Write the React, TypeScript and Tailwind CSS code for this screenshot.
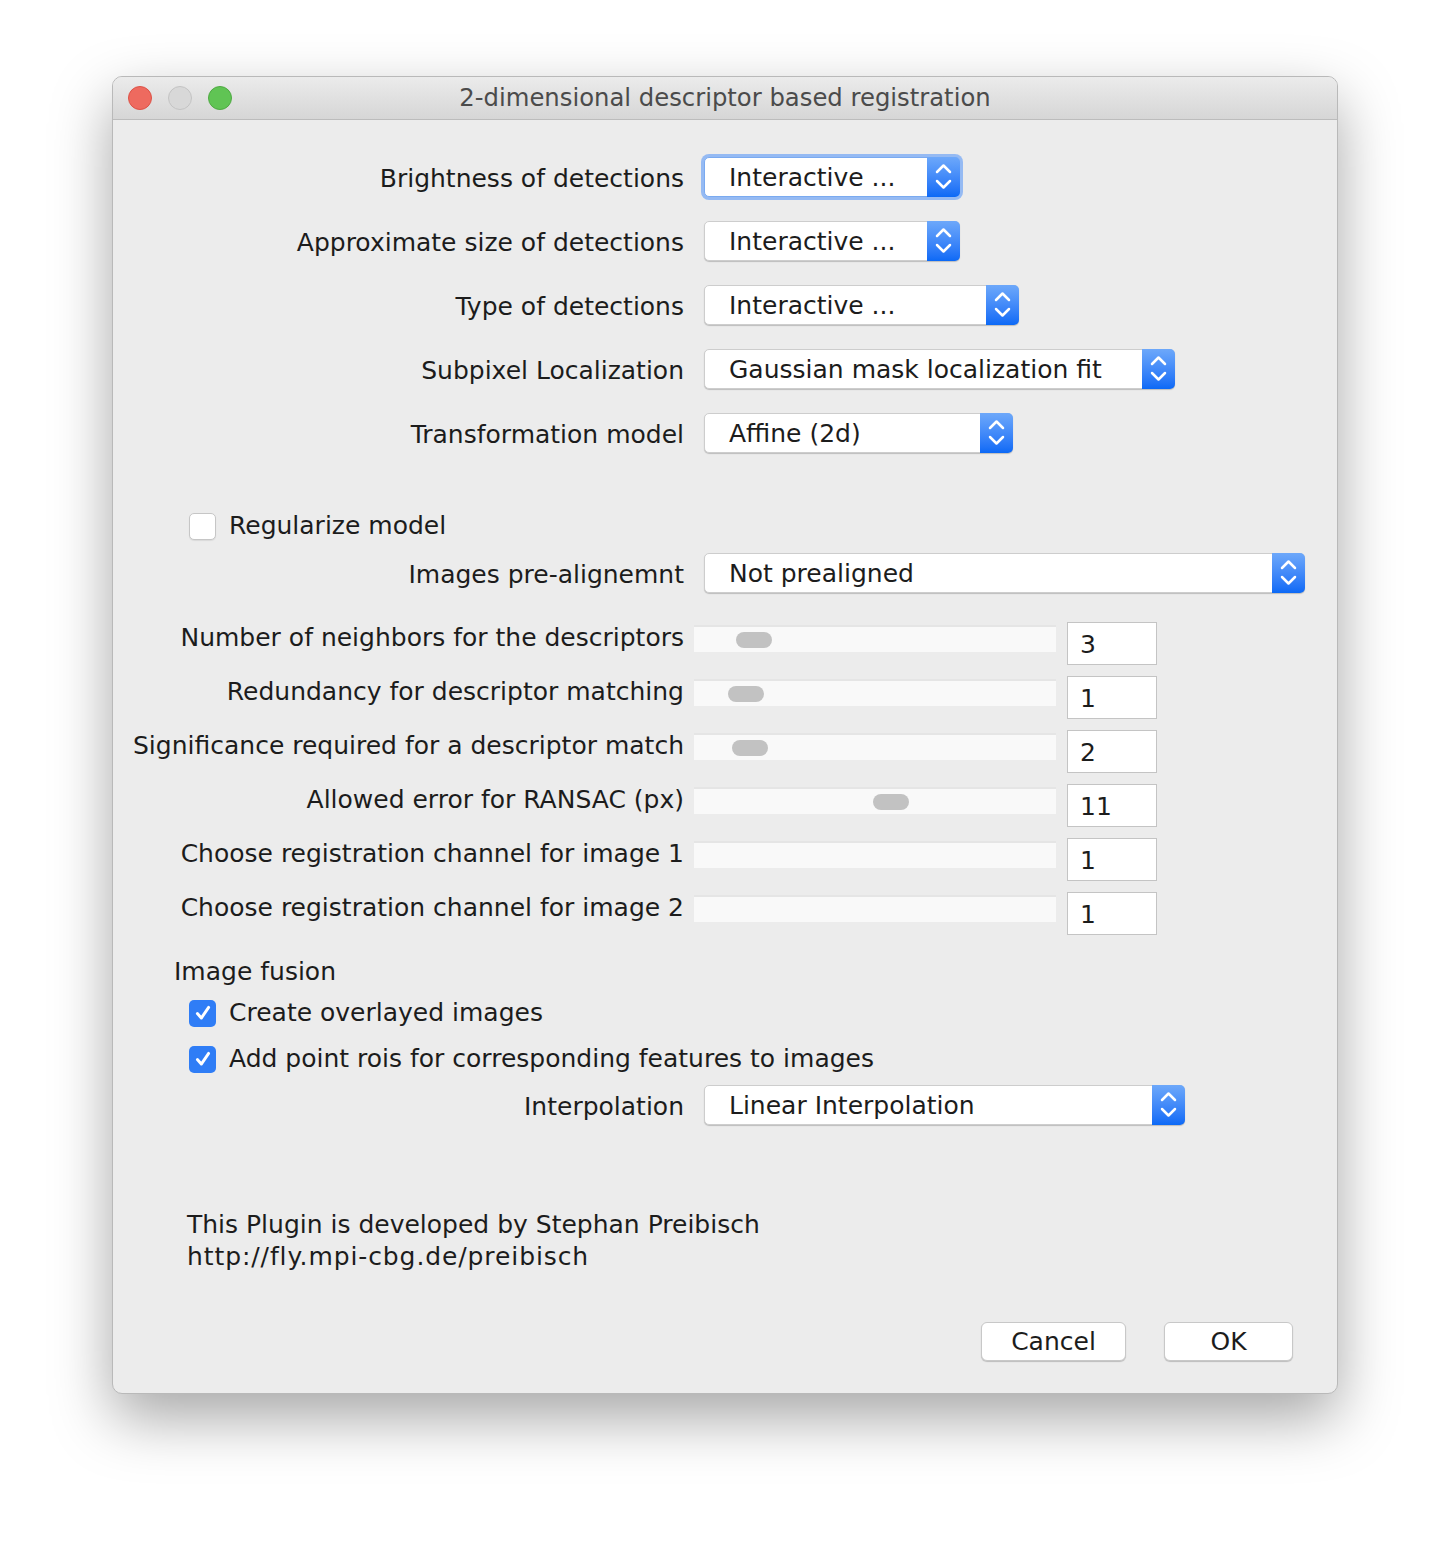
import clsx from "clsx"

const Chevrons = () => (
  <svg className="h-[40px] w-[33px]" viewBox="0 0 33 40" fill="none" stroke="white" strokeWidth={2.5} strokeLinecap="round" strokeLinejoin="round" aria-hidden="true">
    <polyline points="10,15 16.5,8.5 23,15" />
    <polyline points="10,24 16.5,30.5 23,24" />
  </svg>
)

const Select = ({ value, width, focused }: { value: string; width: string; focused?: boolean }) => (
  <div
    className={clsx(
      "flex h-[40px] items-center justify-between rounded-[5px] bg-white",
      width,
      focused
        ? "border border-[#7aaaf0] shadow-[0_0_0_3px_rgba(120,170,245,0.75)]"
        : "border border-[#cdcdcd] shadow-[0_1px_1px_rgba(0,0,0,0.2)]"
    )}
  >
    <span className="pl-[24px] leading-none">{value}</span>
    <div className="-mr-px flex h-[40px] w-[33px] items-center justify-center rounded-r-[5px] bg-linear-to-b from-[#6da8fa] to-[#0a69f6]">
      <Chevrons />
    </div>
  </div>
)

const Label = ({ children }: { children: string }) => (
  <div className="w-[571px] shrink-0 text-right leading-[30px]">{children}</div>
)

const SelectRow = ({ label, value, width, focused }: { label: string; value: string; width: string; focused?: boolean }) => (
  <div className="flex h-[40px] items-center">
    <div className="pt-[4px]">
      <Label>{label}</Label>
    </div>
    <div className="ml-[20px]">
      <Select value={value} width={width} focused={focused} />
    </div>
  </div>
)

const SliderRow = ({ label, value, knob }: { label: string; value: string; knob?: string }) => (
  <div className="flex h-[43px] items-start">
    <div className="pt-[1px]">
      <Label>{label}</Label>
    </div>
    <div className="ml-[10px] mt-[3px] flex h-[27px] w-[362px] items-center border-t-2 border-[#e5e5e5] bg-[#f9f9f9]">
      {knob && <div className={clsx("h-[16px] w-[36px] rounded-full bg-[#c2c2c2]", knob)} />}
    </div>
    <div className="ml-[11px] flex h-[43px] w-[90px] items-center border border-[#c4c4c4] bg-white pl-[12px] pt-[3px]">
      {value}
    </div>
  </div>
)

const Checkbox = ({ label, checked }: { label: string; checked?: boolean }) => (
  <div className="flex h-[28px] items-center pl-[76px]">
    {checked ? (
      <div className="flex h-[27px] w-[27px] items-center justify-center rounded-[5px] bg-[#2f7df6]">
        <svg className="h-[18px] w-[18px]" viewBox="0 0 16 16" fill="none" stroke="white" strokeWidth={2.6} strokeLinecap="round" strokeLinejoin="round">
          <polyline points="3,8.5 6.5,12.5 13,3" />
        </svg>
      </div>
    ) : (
      <div className="h-[27px] w-[27px] rounded-[5px] border border-[#c6c6c6] bg-white shadow-[0_1px_1px_rgba(0,0,0,0.08)]" />
    )}
    <span className="ml-[13px] leading-[30px]">{label}</span>
  </div>
)

export default function App() {
  return (
    <div className="min-h-[1542px] bg-white pt-[76px] pl-[112px] font-['DejaVu_Sans','Lucida_Grande',sans-serif] text-[25px] text-[#1c1c1c]">
      <div className="w-[1226px] overflow-hidden rounded-[10px] border border-[#b9b9b9] bg-[#ececec] shadow-[0_24px_60px_rgba(0,0,0,0.35)]">
        {/* title bar */}
        <div className="grid h-[43px] grid-cols-[1fr_auto_1fr] items-center border-b border-[#bcbcbc] bg-linear-to-b from-[#ebebeb] to-[#d6d6d6]">
          <div className="flex gap-[16px] pl-[15px]">
            <div className="h-[24px] w-[24px] rounded-full border border-[#dc5247] bg-[#ee6a5f]" />
            <div className="h-[24px] w-[24px] rounded-full border border-[#c3c3c3] bg-[#d8d8d8]" />
            <div className="h-[24px] w-[24px] rounded-full border border-[#4fa943] bg-[#60c454]" />
          </div>
          <div className="text-[24.3px] text-[#4b4b4b] leading-none">2-dimensional descriptor based registration</div>
          <div />
        </div>

        <div className="flex flex-col pt-[37px]">
          <div className="flex flex-col gap-[24px]">
            <SelectRow label="Brightness of detections" value="Interactive ..." width="w-[256px]" focused />
            <SelectRow label="Approximate size of detections" value="Interactive ..." width="w-[256px]" />
            <SelectRow label="Type of detections" value="Interactive ..." width="w-[315px]" />
            <SelectRow label="Subpixel Localization" value="Gaussian mask localization fit" width="w-[471px]" />
            <SelectRow label="Transformation model" value="Affine (2d)" width="w-[309px]" />
          </div>

          <div className="mt-[59px]">
            <Checkbox label="Regularize model" />
          </div>
          <div className="mt-[13px]">
            <SelectRow label="Images pre-alignemnt" value="Not prealigned" width="w-[601px]" />
          </div>

          <div className="mt-[29px] flex flex-col gap-[11px]">
            <SliderRow label="Number of neighbors for the descriptors" value="3" knob="ml-[42px]" />
            <SliderRow label="Redundancy for descriptor matching" value="1" knob="ml-[34px]" />
            <SliderRow label="Significance required for a descriptor match" value="2" knob="ml-[38px]" />
            <SliderRow label="Allowed error for RANSAC (px)" value="11" knob="ml-[179px]" />
            <SliderRow label="Choose registration channel for image 1" value="1" />
            <SliderRow label="Choose registration channel for image 2" value="1" />
          </div>

          <div className="mt-[22px] pl-[61px] leading-[30px]">Image fusion</div>
          <div className="mt-[12px]">
            <Checkbox label="Create overlayed images" checked />
          </div>
          <div className="mt-[18px]">
            <Checkbox label="Add point rois for corresponding features to images" checked />
          </div>
          <div className="mt-[12px]">
            <SelectRow label="Interpolation" value="Linear Interpolation" width="w-[481px]" />
          </div>

          <div className="mt-[84px] pl-[74px] leading-[32px]">
            <div>This Plugin is developed by Stephan Preibisch</div>
            <div className="tracking-[0.9px]">http://fly.mpi-cbg.de/preibisch</div>
          </div>

          <div className="mt-[49px] flex justify-end gap-[38px] pb-[32px] pr-[44px]">
            <button className="h-[39px] w-[145px] rounded-[6px] border border-[#c8c8c8] bg-white leading-none shadow-[0_1px_1px_rgba(0,0,0,0.2)]">
              Cancel
            </button>
            <button className="h-[39px] w-[129px] rounded-[6px] border border-[#c8c8c8] bg-white leading-none shadow-[0_1px_1px_rgba(0,0,0,0.2)]">
              OK
            </button>
          </div>
        </div>
      </div>
    </div>
  )
}
